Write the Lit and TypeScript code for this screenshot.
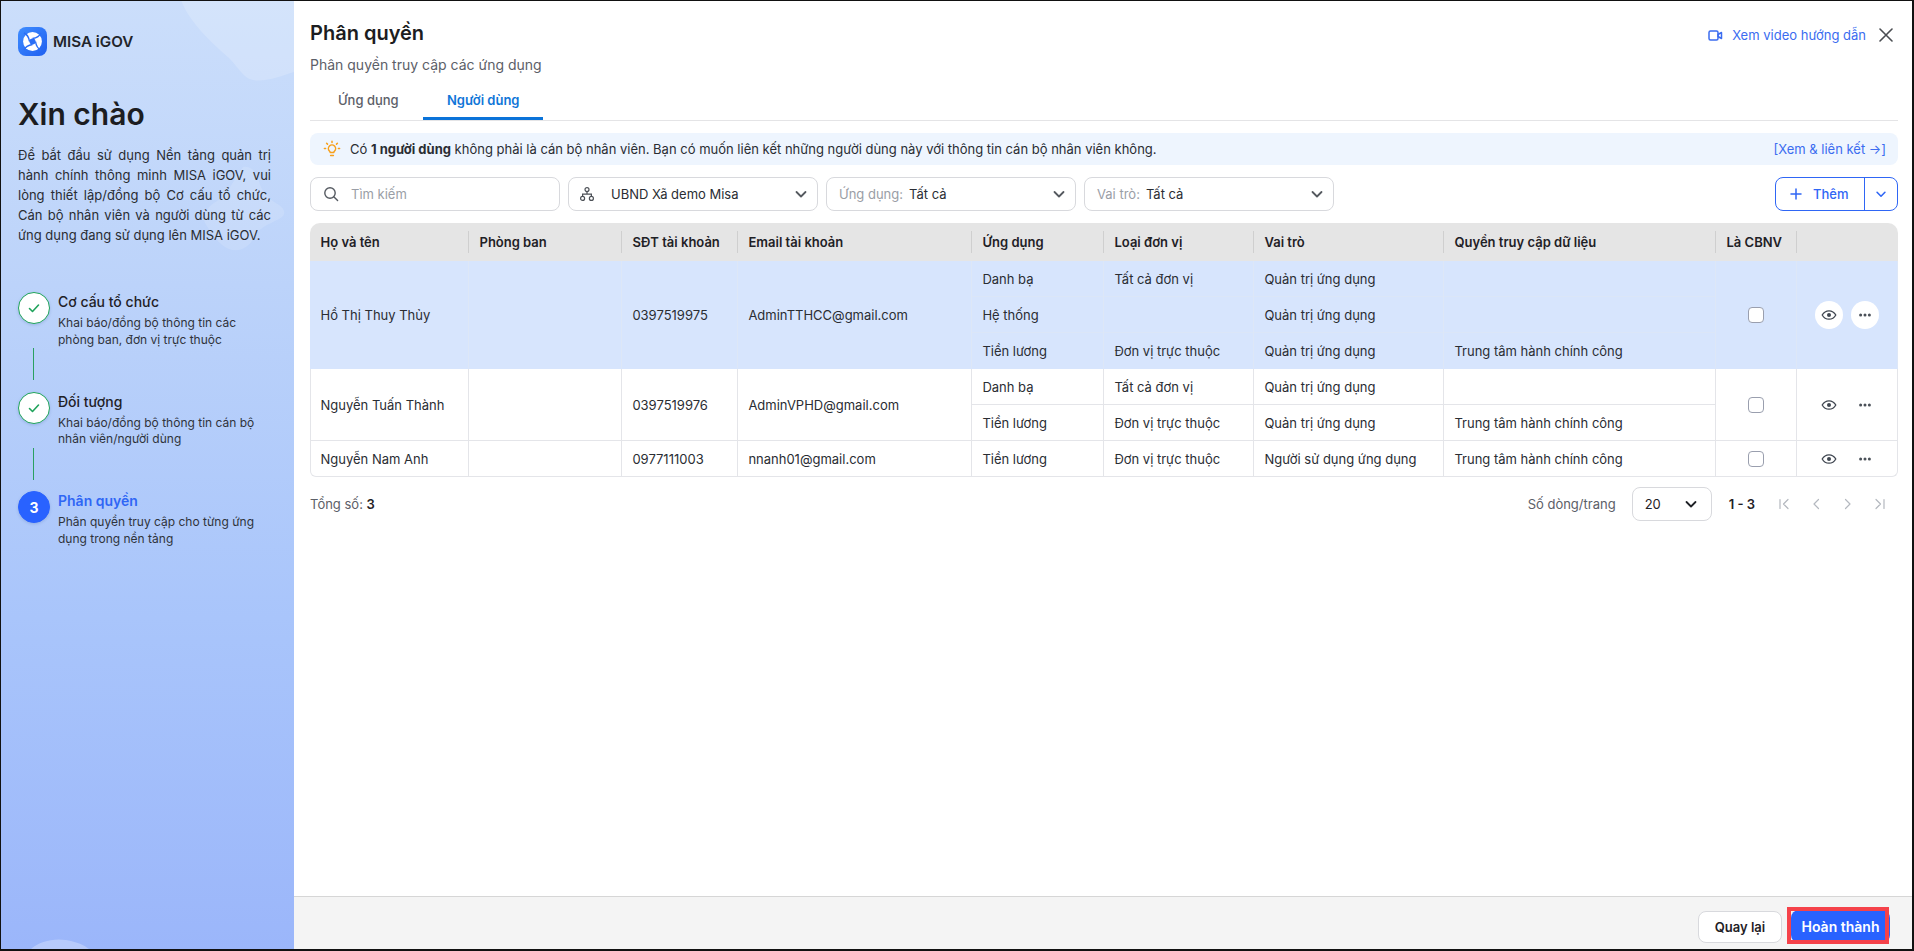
// app.ts
import { LitElement, css, html, svg, nothing } from "lit";
import { customElement } from "lit/decorators.js";

interface SubRow {
  app: string;
  unit: string;
  role: string;
  scope: string;
}

interface UserRow {
  name: string;
  phone: string;
  email: string;
  active?: boolean;
  subs: SubRow[];
}

const CENTER = "Trung tâm hành chính công";
const ADMIN = "Quản trị ứng dụng";

const USERS: UserRow[] = [
  {
    name: "Hồ Thị Thuy Thủy",
    phone: "0397519975",
    email: "AdminTTHCC@gmail.com",
    active: true,
    subs: [
      { app: "Danh bạ", unit: "Tất cả đơn vị", role: ADMIN, scope: "" },
      { app: "Hệ thống", unit: "", role: ADMIN, scope: "" },
      { app: "Tiền lương", unit: "Đơn vị trực thuộc", role: ADMIN, scope: CENTER },
    ],
  },
  {
    name: "Nguyễn Tuấn Thành",
    phone: "0397519976",
    email: "AdminVPHD@gmail.com",
    subs: [
      { app: "Danh bạ", unit: "Tất cả đơn vị", role: ADMIN, scope: "" },
      { app: "Tiền lương", unit: "Đơn vị trực thuộc", role: ADMIN, scope: CENTER },
    ],
  },
  {
    name: "Nguyễn Nam Anh",
    phone: "0977111003",
    email: "nnanh01@gmail.com",
    subs: [{ app: "Tiền lương", unit: "Đơn vị trực thuộc", role: "Người sử dụng ứng dụng", scope: CENTER }],
  },
];

const COLUMNS: [string, number][] = [
  ["Họ và tên", 159],
  ["Phòng ban", 153],
  ["SĐT tài khoản", 116],
  ["Email tài khoản", 234],
  ["Ứng dụng", 132],
  ["Loại đơn vị", 150],
  ["Vai trò", 190],
  ["Quyền truy cập dữ liệu", 272],
  ["Là CBNV", 81],
  ["", 101],
];

const STEPS = [
  { title: "Cơ cấu tổ chức", desc: "Khai báo/đồng bộ thông tin các phòng ban, đơn vị trực thuộc" },
  { title: "Đối tượng", desc: "Khai báo/đồng bộ thông tin cán bộ nhân viên/người dùng" },
  { title: "Phân quyền", desc: "Phân quyền truy cập cho từng ứng dụng trong nền tảng", current: true },
];

const chevron = (size = 16) => html`<svg width=${size} height=${size} viewBox="0 0 16 16" fill="none" stroke="currentColor" stroke-width="1.8" stroke-linecap="round" stroke-linejoin="round"><path d="M3.5 6l4.5 4.5L12.5 6" /></svg>`;

const checkIcon = html`<svg width="14" height="14" viewBox="0 0 14 14" fill="none" stroke="#1fa35b" stroke-width="1.6" stroke-linecap="round" stroke-linejoin="round"><path d="M2.5 7.5l3 3 6-6.5" /></svg>`;

const eyeIcon = html`<svg width="16" height="16" viewBox="0 0 16 16" fill="none" stroke="#3f4650" stroke-width="1.3"><path d="M1.2 8C2.8 5.2 5.2 3.8 8 3.8s5.2 1.4 6.8 4.2c-1.6 2.8-4 4.2-6.8 4.2S2.8 10.8 1.2 8z" /><circle cx="8" cy="8" r="2" fill="#3f4650" stroke="none" /></svg>`;

const dotsIcon = html`<svg width="16" height="16" viewBox="0 0 16 16" fill="#4a5058"><circle cx="3.6" cy="8" r="1.5" /><circle cx="8" cy="8" r="1.5" /><circle cx="12.4" cy="8" r="1.5" /></svg>`;

const pagerIcon = (d: string) => html`<svg width="16" height="16" viewBox="0 0 16 16" fill="none" stroke="#b4b8bf" stroke-width="1.2" stroke-linecap="round" stroke-linejoin="round"><path d=${d} /></svg>`;

@customElement("app-root")
export class AppRoot extends LitElement {
  static styles = css`
    :host {
      display: block;
      height: 951px;
      font-family: Inter, "Noto Sans", sans-serif;
      color: #1f2126;
      font-size: 13px;
    }

    .frame {
      box-sizing: border-box;
      height: 951px;
      display: flex;
      background: #fff;
      border: solid #111;
      border-width: 1px 2px 2px 1px;
    }

    /* left panel */
    .side {
      position: relative;
      overflow: hidden;
      flex: none;
      box-sizing: border-box;
      width: 293px;
      padding: 26px 23px 0 17px;
      background: linear-gradient(180deg, #cbdefb 0%, #bcd3fa 30%, #a9c5fb 65%, #9bb6fa 100%);
    }

    .side-art {
      position: absolute;
      left: -1px;
      top: -1px;
      width: 294px;
      height: 950px;
    }

    .side > :not(.side-art) {
      position: relative;
    }

    .brand {
      display: flex;
      align-items: center;
      gap: 6px;
      height: 29px;
      font-size: 15.2px;
      font-weight: 600;
      color: #22252b;
    }

    .hello {
      margin: 38px 0 0;
      font-size: 30px;
      line-height: 40px;
      font-weight: 600;
      color: #1c1d21;
    }

    .intro {
      margin: 11px 0 0;
      line-height: 20px;
      text-align: justify;
      color: #2a2d33;
    }

    .steps {
      margin-top: 47px;
    }

    .step {
      display: flex;
      gap: 8px;
      height: 56px;
    }

    .dot {
      flex: none;
      box-sizing: border-box;
      width: 32px;
      height: 32px;
      display: flex;
      align-items: center;
      justify-content: center;
      border-radius: 50%;
      background: #fff;
      border: 1px solid #1fa35b;
      box-shadow: 0 1px 3px rgba(40, 70, 140, 0.2);
    }

    .dot.now {
      background: #2962ff;
      border-color: #2962ff;
      color: #fff;
      font-size: 14px;
      font-weight: 700;
    }

    .step-title {
      font-size: 14px;
      line-height: 20px;
      font-weight: 500;
      color: #1f2126;
    }

    .step-title.now {
      color: #2f66f5;
      font-weight: 600;
    }

    .step-desc {
      margin-top: 3px;
      font-size: 12px;
      line-height: 16.5px;
      color: #2f333a;
    }

    .link-line {
      width: 1px;
      height: 32px;
      margin: 0 0 11.5px 15px;
      background: #2aa060;
    }

    /* right panel */
    .main {
      flex: 1;
      min-width: 0;
      display: flex;
      flex-direction: column;
    }

    .body {
      flex: 1;
      padding: 18px 14px 0 16px;
    }

    .top {
      display: flex;
      justify-content: space-between;
    }

    .title {
      font-size: 20px;
      line-height: 28px;
      font-weight: 600;
      color: #1c1d21;
    }

    .subtitle {
      margin-top: 8px;
      font-size: 14px;
      line-height: 20px;
      color: #5c6068;
    }

    .top-links {
      display: flex;
      align-items: center;
      height: 32px;
      padding-right: 5px;
      color: #3b6cf0;
    }

    .guide {
      display: flex;
      align-items: center;
      gap: 9px;
      margin-right: 13px;
    }

    .tabs {
      display: flex;
      height: 37px;
      margin-top: 8px;
      padding-left: 4px;
      border-bottom: 1px solid #e4e4e6;
    }

    .tab {
      box-sizing: border-box;
      width: 108px;
      padding-left: 24px;
      line-height: 34px;
      color: #5c6068;
      font-weight: 500;
    }

    .tab.on {
      width: 120px;
      height: 37px;
      margin-left: 1px;
      color: #0f76d8;
      font-weight: 600;
      border-bottom: 3px solid #0a73d9;
    }

    .notice {
      display: flex;
      align-items: center;
      height: 32px;
      margin-top: 12px;
      padding: 0 12px;
      border-radius: 8px;
      background: #eef5fe;
      color: #2a2d33;
    }

    .notice svg {
      margin-right: 8px;
    }

    .notice b {
      font-weight: 700;
    }

    .notice a {
      margin-left: auto;
      color: #3b6cf0;
    }

    .filters {
      display: flex;
      gap: 8px;
      margin-top: 12px;
    }

    .field {
      box-sizing: border-box;
      width: 250px;
      height: 34px;
      display: flex;
      align-items: center;
      padding: 0 8px 0 12px;
      border: 1px solid #d8d9dd;
      border-radius: 8px;
      color: #2a2d33;
      background: #fff;
    }

    .field .hint {
      color: #9a9ea6;
      margin-right: 6px;
    }

    .field .arrow {
      margin-left: auto;
      display: flex;
      color: #55595f;
    }

    .field .lead {
      margin-right: 12px;
      display: flex;
    }

    .field .lead.org {
      margin: 0 16px 0 -2px;
    }

    .add {
      box-sizing: border-box;
      margin-left: auto;
      width: 123px;
      height: 34px;
      display: flex;
      align-items: center;
      border: 1px solid #2f66f5;
      border-radius: 8px;
      color: #2f66f5;
      font-weight: 500;
    }

    .add-main {
      flex: 1;
      height: 100%;
      display: flex;
      align-items: center;
      gap: 11px;
      padding-left: 14px;
      border-right: 1px solid #2f66f5;
    }

    .add-arrow {
      width: 32px;
      display: flex;
      justify-content: center;
    }

    table {
      width: 1587px;
      margin-top: 12px;
      table-layout: fixed;
      border-collapse: separate;
      border-spacing: 0;
    }

    th {
      height: 38px;
      padding: 0;
      background: #e5e5e5;
      text-align: left;
      font-weight: 600;
      color: #1f2126;
    }

    th:first-child {
      border-top-left-radius: 10px;
    }

    th:last-child {
      border-top-right-radius: 10px;
    }

    .th-in {
      height: 22px;
      line-height: 22px;
      padding-left: 10.5px;
      border-right: 1px solid #cfcfcf;
      white-space: nowrap;
    }

    th:last-child .th-in {
      border-right: 0;
    }

    td {
      height: 36px;
      box-sizing: border-box;
      padding: 0 10px 0 10.4px;
      color: #2a2d33;
      border-right: 1px solid #e4e5e9;
      border-bottom: 1px solid #e4e5e9;
      white-space: nowrap;
    }

    td.name {
      padding-left: 9.5px;
      border-left: 1px solid #e4e5e9;
    }

    tbody tr:last-child td:first-child {
      border-bottom-left-radius: 6px;
    }

    tbody tr:last-child td:last-child {
      border-bottom-right-radius: 6px;
    }

    tr.active td {
      background: #d7e5fd;
      border-color: #d7e5fd;
    }

    tr.active td.cell {
      border-right-color: #dde7f7;
    }

    tr.active td.sub {
      border-bottom-color: #dbe6f8;
    }

    tr.active.last td.sub {
      border-bottom-color: #d7e5fd;
    }

    .center {
      padding: 0;
      text-align: center;
    }

    .box {
      display: inline-block;
      box-sizing: border-box;
      width: 16px;
      height: 16px;
      vertical-align: middle;
      border: 1px solid #9a9fae;
      border-radius: 4px;
      background: #fff;
    }

    .acts {
      display: flex;
      justify-content: center;
      gap: 8px;
    }

    .act {
      width: 28px;
      height: 28px;
      display: flex;
      align-items: center;
      justify-content: center;
      border-radius: 50%;
    }

    tr.active .act {
      background: #fff;
    }

    .pager {
      display: flex;
      align-items: center;
      height: 34px;
      margin-top: 10px;
      color: #5c6068;
    }

    .pager b {
      color: #1f2126;
      font-weight: 600;
    }

    .pager .rows {
      margin-left: auto;
    }

    .size {
      box-sizing: border-box;
      width: 80px;
      height: 34px;
      display: flex;
      align-items: center;
      justify-content: space-between;
      margin: 0 17px 0 16px;
      padding: 0 12px;
      border: 1px solid #d8d9dd;
      border-radius: 8px;
      color: #1f2126;
    }

    .nav {
      display: flex;
      gap: 16px;
      margin: 0 10px 0 21px;
    }

    .foot {
      box-sizing: border-box;
      height: 53px;
      display: flex;
      align-items: flex-end;
      justify-content: flex-end;
      gap: 9px;
      padding: 0 22px 6px 0;
      background: #f4f4f4;
      border-top: 1px solid #d6d6d6;
    }

    .btn {
      box-sizing: border-box;
      height: 32px;
      display: flex;
      align-items: center;
      justify-content: center;
      border-radius: 8px;
      font-weight: 600;
    }

    .btn.back {
      width: 84px;
      background: #fff;
      border: 1px solid #d8d9dd;
    }

    .btn.done {
      position: relative;
      width: 99px;
      height: 33px;
      font-size: 14px;
      background: #2962ff;
      color: #fff;
    }

    .mark {
      position: absolute;
      left: -4px;
      top: -3px;
      width: 102px;
      height: 37px;
      box-sizing: border-box;
      border: 4px solid #f5424a;
    }
  `;

  private renderUser(u: UserRow) {
    const span = u.subs.length;
    return u.subs.map((s, i) => {
      const cls = [u.active ? "active" : "", i === span - 1 ? "last" : ""].join(" ");
      return html`<tr class=${cls}>
        ${i === 0
          ? html`
              <td class="cell name" rowspan=${span}>${u.name}</td>
              <td class="cell" rowspan=${span}></td>
              <td class="cell" rowspan=${span}>${u.phone}</td>
              <td class="cell" rowspan=${span}>${u.email}</td>
            `
          : nothing}
        <td class="sub cell">${s.app}</td>
        <td class="sub cell">${s.unit}</td>
        <td class="sub cell">${s.role}</td>
        <td class="sub cell">${s.scope}</td>
        ${i === 0
          ? html`
              <td class="cell center" rowspan=${span}><span class="box"></span></td>
              <td class="cell center" rowspan=${span}>
                <div class="acts">
                  <span class="act">${eyeIcon}</span>
                  <span class="act">${dotsIcon}</span>
                </div>
              </td>
            `
          : nothing}
      </tr>`;
    });
  }

  render() {
    return html`
      <div class="frame">
        <aside class="side">
          <svg class="side-art" viewBox="0 0 294 950" fill="#fff">
            <path opacity="0.18" d="M181 0c8 22 30 42 48 58 10 10 14 20 24 22 14 2 28-4 41-8V0z" />
            <path opacity="0.13" d="M243 167c8-2 14 6 16 14 2 10 10 18 20 24 6 4 8 10 0 14-12 6-22 10-26 20-4 8-14 14-24 10-10-4-18-16-24-26-4-8 2-16 12-22 12-8 18-24 26-34z" />
            <path opacity="0.28" d="M30 950c8-8 22-12 36-10 12 2 20 6 24 10z" />
          </svg>
          <div class="brand">
            <svg width="29" height="29" viewBox="0 0 29 29">
              <defs>
                <linearGradient id="lg" x1="0" y1="0" x2="1" y2="1">
                  <stop offset="0" stop-color="#3f8dff" />
                  <stop offset="1" stop-color="#1f5ff0" />
                </linearGradient>
              </defs>
              <rect width="29" height="29" rx="8" fill="url(#lg)" />
              <circle cx="14.5" cy="14.5" r="9.4" fill="#fff" />
              <circle cx="14.5" cy="14.5" r="3" fill="#2a6ef6" />
              ${[0, 90, 180, 270].map(
                (a) => svg`<path transform="rotate(${a} 14.5 14.5)" d="M14.5 11.5C18 11 21.5 9.5 23 6" fill="none" stroke="#2a6ef6" stroke-width="1.4" />`
              )}
            </svg>
            MISA iGOV
          </div>
          <h1 class="hello">Xin chào</h1>
          <p class="intro">
            Để bắt đầu sử dụng Nền tảng quản trị hành chính thông minh MISA iGOV, vui lòng thiết lập/đồng bộ Cơ cấu tổ
            chức, Cán bộ nhân viên và người dùng từ các ứng dụng đang sử dụng lên MISA iGOV.
          </p>
          <div class="steps">
            ${STEPS.map(
              (s, i) => html`
                <div class="step">
                  <div class="dot ${s.current ? "now" : ""}">${s.current ? i + 1 : checkIcon}</div>
                  <div>
                    <div class="step-title ${s.current ? "now" : ""}">${s.title}</div>
                    <div class="step-desc">${s.desc}</div>
                  </div>
                </div>
                ${i < STEPS.length - 1 ? html`<div class="link-line"></div>` : nothing}
              `
            )}
          </div>
        </aside>

        <div class="main">
          <div class="body">
            <div class="top">
              <div>
                <div class="title">Phân quyền</div>
                <div class="subtitle">Phân quyền truy cập các ứng dụng</div>
              </div>
              <div class="top-links">
                <span class="guide">
                  <svg width="15" height="15" viewBox="0 0 15 15" fill="none" stroke="currentColor" stroke-width="1.5" stroke-linejoin="round"><rect x="1" y="3" width="9" height="9" rx="1.5" /><path d="M10 6.5l3.5-2v6l-3.5-2z" /></svg>
                  Xem video hướng dẫn
                </span>
                <svg width="14" height="14" viewBox="0 0 14 14" fill="none" stroke="#4a4d52" stroke-width="1.6" stroke-linecap="round"><path d="M1 1l12 12M13 1L1 13" /></svg>
              </div>
            </div>

            <div class="tabs">
              <div class="tab">Ứng dụng</div>
              <div class="tab on">Người dùng</div>
            </div>

            <div class="notice">
              <svg width="20" height="20" viewBox="0 0 20 20" fill="none" stroke="#f7a01c" stroke-width="1.5" stroke-linecap="round" stroke-linejoin="round"><path d="M7.4 12a3.6 3.6 0 1 1 5.2 0c-.5.5-.8 1-.8 1.6H8.2c0-.6-.3-1.1-.8-1.6zM8.6 16.4h2.8M10 2.2v1.2M4.6 4.2l.9.9M15.4 4.2l-.9.9M2.4 9.4h1.2M16.4 9.4h1.2" /></svg>
              <span>Có <b>1 người dùng</b> không phải là cán bộ nhân viên. Bạn có muốn liên kết những người dùng này với thông tin cán bộ nhân viên không.</span>
              <a>[Xem &amp; liên kết →]</a>
            </div>

            <div class="filters">
              <div class="field">
                <span class="lead">
                  <svg width="16" height="16" viewBox="0 0 16 16" fill="none" stroke="#555a61" stroke-width="1.4" stroke-linecap="round"><circle cx="7" cy="7" r="5.2" /><path d="M11 11l3.6 3.6" /></svg>
                </span>
                <span class="hint">Tìm kiếm</span>
              </div>
              <div class="field">
                <span class="lead org">
                  <svg width="16" height="16" viewBox="0 0 16 16" fill="none" stroke="#4d5157" stroke-width="1.2"><circle cx="8" cy="3.6" r="2" /><circle cx="3.6" cy="12.4" r="2" /><circle cx="12.4" cy="12.4" r="2" /><path d="M8 5.6v2.6M3.6 10.4V8.2h8.8v2.2" /></svg>
                </span>
                UBND Xã demo Misa
                <span class="arrow">${chevron()}</span>
              </div>
              <div class="field">
                <span class="hint">Ứng dụng:</span>Tất cả
                <span class="arrow">${chevron()}</span>
              </div>
              <div class="field">
                <span class="hint">Vai trò:</span>Tất cả
                <span class="arrow">${chevron()}</span>
              </div>
              <div class="add">
                <div class="add-main">
                  <svg width="12" height="12" viewBox="0 0 12 12" fill="none" stroke="currentColor" stroke-width="1.5" stroke-linecap="round"><path d="M6 1v10M1 6h10" /></svg>
                  Thêm
                </div>
                <div class="add-arrow">${chevron(14)}</div>
              </div>
            </div>

            <table>
              <colgroup>
                ${COLUMNS.map(([, w]) => html`<col style="width:${w}px" />`)}
              </colgroup>
              <thead>
                <tr>
                  ${COLUMNS.map(([label]) => html`<th><div class="th-in">${label}</div></th>`)}
                </tr>
              </thead>
              <tbody>
                ${USERS.map((u) => this.renderUser(u))}
              </tbody>
            </table>

            <div class="pager">
              <span>Tổng số: <b>3</b></span>
              <span class="rows">Số dòng/trang</span>
              <div class="size">20 ${chevron()}</div>
              <b>1 - 3</b>
              <div class="nav">
                ${pagerIcon("M4 3.5v9M12 3.5L7.5 8l4.5 4.5")}
                ${pagerIcon("M10.5 3.5L6 8l4.5 4.5")}
                ${pagerIcon("M5.5 3.5L10 8l-4.5 4.5")}
                ${pagerIcon("M12 3.5v9M4 3.5L8.5 8 4 12.5")}
              </div>
            </div>
          </div>

          <div class="foot">
            <div class="btn back">Quay lại</div>
            <div class="btn done">Hoàn thành<span class="mark"></span></div>
          </div>
        </div>
      </div>
    `;
  }
}
